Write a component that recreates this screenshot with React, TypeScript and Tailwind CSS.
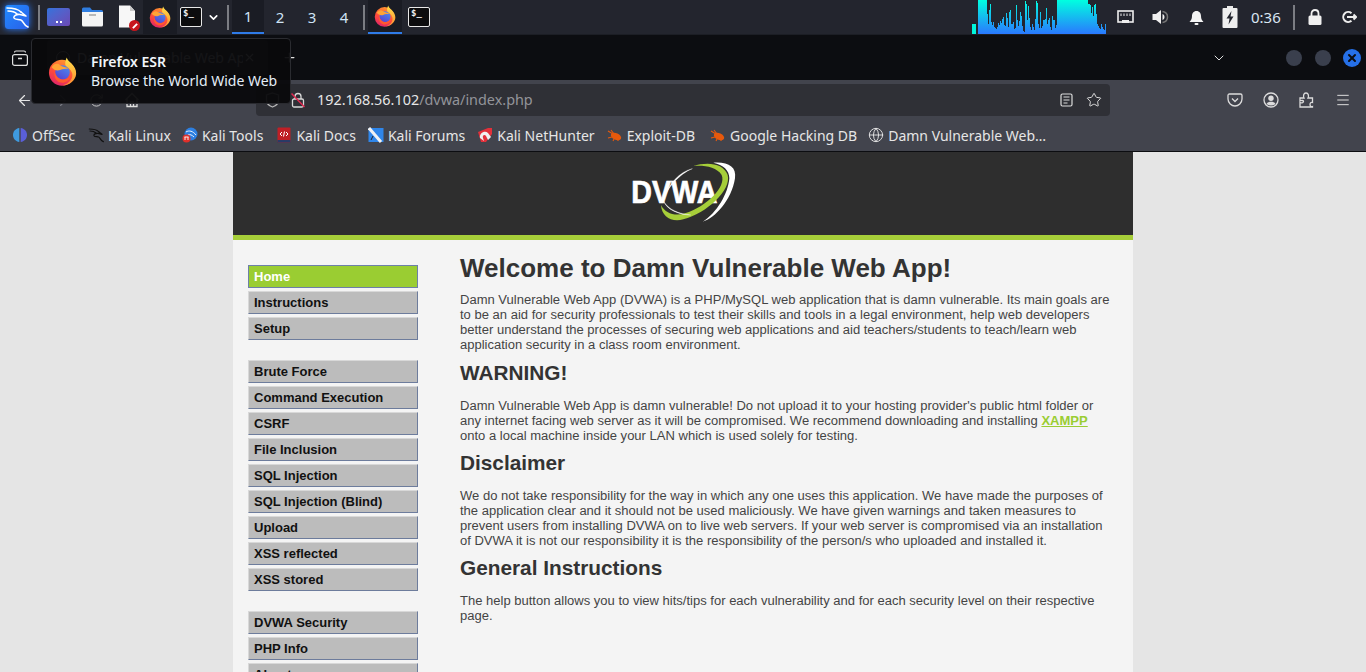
import React from "react";
import { ArrowLeft, ArrowRight, RotateCw, ChevronDown, Globe, Star, Menu, X, Plus } from "lucide-react";

const heights = [34,34,34,34,34,34,34,34,34,20,10,24,30,12,9,12,7,6,5,7,11,9,13,11,15,17,9,8,21,16,7,22,24,10,10,12,5,6,29,14,8,13,22,18,8,3,2,33,30,14,28,16,7,4,10,7,4,15,33,31,10,6,22,6,8,14,14,15,26,10,14,16,7,4,18,14,14,6,9,34,34,34,34,34,34,34,34,34,34,34,34,34,34,34,34,34,34,34,34,34,34,34,34,34,34,34,34,34,34,34,30,30,29,21,27,18,29,30,20,10,8,6,5,10,7,5,4,10];

function Firefox({ size = 24, id }: { size?: number; id: string }) {
  return (
    <svg width={size} height={size} viewBox="0 0 24 24">
      <defs>
        <linearGradient id={id} x1="0.7" y1="0" x2="0.3" y2="1">
          <stop offset="0" stopColor="#ff9a2e" />
          <stop offset="0.55" stopColor="#ff4a3a" />
          <stop offset="1" stopColor="#e0246a" />
        </linearGradient>
        <linearGradient id={`${id}y`} x1="0" y1="0" x2="0" y2="1">
          <stop offset="0" stopColor="#ffe14a" />
          <stop offset="1" stopColor="#ff8a30" />
        </linearGradient>
        <linearGradient id={`${id}b`} x1="0.8" y1="0" x2="0.2" y2="1">
          <stop offset="0" stopColor="#4a8cf0" />
          <stop offset="1" stopColor="#5a3fd0" />
        </linearGradient>
      </defs>
      <circle cx="11.6" cy="13" r="10.8" fill={`url(#${id})`} />
      <circle cx="12" cy="12.8" r="6" fill={`url(#${id}b)`} />
      <path d="M15.5 0.5C16 4 23.8 7 23.3 14C23 19 18 23.5 12 23.6C18 22 21 17.5 20 13.5C19 10 16 8.5 14.5 7C14 5 14.5 2.5 15.5 0.5Z" fill={`url(#${id}y)`} />
      <path d="M3 8.5C4.5 5.5 8 4.8 10 6.8C12 8.3 14.5 8.2 17 9.5C14 10 12.5 9.6 10 10.8C7.5 11.8 4.8 10.8 3 8.5Z" fill="#ffa436" />
      <path d="M5.5 12C6.5 16.5 10 19 13.5 18.6C16 18.3 18 16.5 19 15C18 19 14.5 21.5 11 21.2C7 20.8 4.5 16.5 5.5 12Z" fill="#ff5a2e" />
    </svg>
  );
}

function Terminal({ w = 23, h = 20 }: { w?: number; h?: number }) {
  return (
    <div style={{ width: w, height: h }} className="border border-[#e8e8e8] rounded-[2px] bg-[#0c0c0e] pl-[2px] text-[#eee] text-[9px] leading-[11px] font-['DejaVu_Sans_Mono',monospace] font-bold">
      $_
    </div>
  );
}

function Sep() {
  return <div className="w-[2px] h-[25px] bg-[#7b7d83] shrink-0" />;
}

function Dragon({ stroke = "#fff", width = 1.7 }: { stroke?: string; width?: number }) {
  return (
    <svg viewBox="0 0 24 24" className="w-full h-full" fill="none" stroke={stroke} strokeWidth={width} strokeLinecap="round" strokeLinejoin="round">
      <path d="M2 3C8 3 13 4 16 7" />
      <path d="M3 6C7 6 10 7 12 9" />
      <path d="M16 7L21 11L15 9.5C11 9 8.5 11 9 13C10 15 14 14 16 15C18.5 16 18 20 23 22" />
    </svg>
  );
}

function Workspace({ n, active }: { n: string; active?: boolean }) {
  return (
    <div className={`w-[32px] h-[34px] flex items-center justify-center text-[15px] text-[#cfe3f5] ${active ? "border-b-[2px] border-[#2f7be8] bg-[#1a1c24]" : ""}`}>
      {n}
    </div>
  );
}

function Graph() {
  return (
    <svg width="135" height="34" className="block">
      <defs>
        <linearGradient id="spec" gradientUnits="userSpaceOnUse" x1="0" y1="0" x2="0" y2="34">
          <stop offset="0" stopColor="#00ffe0" />
          <stop offset="1" stopColor="#2a78ff" />
        </linearGradient>
      </defs>
      <rect x="0" y="24" width="4" height="10" fill="#00f6dc" />
      {heights.map((h, i) => (
        <rect key={i} x={6 + i} y={34 - h} width="1" height={h} fill="url(#spec)" />
      ))}
    </svg>
  );
}

function TopPanel() {
  return (
    <div className="h-[35px] bg-[#23252e] flex items-center justify-between shrink-0 border-b border-[#1c1e25]">
      <div className="flex items-center h-full">
        <div className="w-[24px] h-[24px] ml-[5px] rounded-[3px] bg-gradient-to-br from-[#1f8bff] to-[#2a5fe8] shadow-[0_0_7px_#2a7bff]">
          <Dragon width={1.6} />
        </div>
        <div className="ml-[9px]"><Sep /></div>
        <div className="ml-[7px] w-[23px] h-[18px] rounded-[2px] bg-gradient-to-br from-[#2f73dc] to-[#6a48b4] flex items-end justify-center pb-[1px]">
          <span className="block w-[6px] h-[2px] mb-[2px] border-b-2 border-dotted border-white" />
        </div>
        <svg className="ml-[11px]" width="23" height="20" viewBox="0 0 23 20">
          <path d="M1 2Q1 0.5 2.5 0.5H9L11 3H20.5Q22 3 22 4.5V6H1Z" fill="#2f7de0" />
          <path d="M1 5H22V18Q22 19.5 20.5 19.5H2.5Q1 19.5 1 18Z" fill="#f3f3f3" />
          <rect x="8" y="7" width="7" height="2" fill="#b8b8b8" />
        </svg>
        <div className="relative ml-[14px] w-[21px] h-[24px]">
          <svg width="18" height="23" viewBox="0 0 18 23">
            <path d="M1 0.5H12L17 6V22.5H1Z" fill="#f7f7f7" />
            <path d="M12 0.5L17 6H12Z" fill="#c8c8c8" />
          </svg>
          <div className="absolute right-[-1px] bottom-[-2px] w-[11px] h-[11px] rounded-full bg-[#c8161d] flex items-center justify-center">
            <span className="block w-[6px] h-[2px] bg-white -rotate-45" />
          </div>
        </div>
        <div className="ml-[4px] w-[34px] h-full bg-[#1a1c24] flex items-center justify-center">
          <Firefox size={22} id="ff1" />
        </div>
        <div className="ml-[3px]"><Terminal w={22} h={20} /></div>
        <ChevronDown className="ml-[5px] text-white" size={13} strokeWidth={3} />
        <div className="ml-[7px]"><Sep /></div>
        <div className="ml-[3px] flex items-center">
          <Workspace n="1" active />
          <Workspace n="2" />
          <Workspace n="3" />
          <Workspace n="4" />
        </div>
        <div className="ml-[3px]"><Sep /></div>
        <div className="ml-[3px] w-[34px] h-[34px] border-b-[2px] border-[#2f7be8] bg-[#1a1c24] flex items-center justify-center">
          <Firefox size={22} id="ff2" />
        </div>
        <div className="ml-[6px]"><Terminal w={22} h={20} /></div>
      </div>
      <div className="flex items-center h-full">
        <div className="self-start"><Graph /></div>
        <svg className="ml-[10px]" width="17" height="14" viewBox="0 0 17 14">
          <rect x="1" y="1" width="15" height="11" fill="none" stroke="#eee" strokeWidth="1.6" />
          <path d="M4 3.5V6M7 3.5V6M10 3.5V6M13 3.5V6" stroke="#eee" strokeWidth="1" />
          <rect x="5" y="10" width="7" height="3" fill="#eee" />
        </svg>
        <svg className="ml-[18px]" width="18" height="16" viewBox="0 0 18 16">
          <path d="M0.5 5H4L9 1V15L4 11H0.5Z" fill="#f0f0f0" />
          <path d="M10.5 2.5C14 3 15.5 5.5 15.5 8C15.5 10.5 14 13 10.5 13.5" fill="none" stroke="#777" strokeWidth="1.5" />
          <path d="M10.5 5C12 5.5 12.5 6.8 12.5 8C12.5 9.2 12 10.5 10.5 11Z" fill="#f0f0f0" />
        </svg>
        <svg className="ml-[19px]" width="15" height="15" viewBox="0 0 15 15">
          <path d="M7.5 1C10.5 1 12 3.5 12 6C12 9 13 10.5 14.5 12H0.5C2 10.5 3 9 3 6C3 3.5 4.5 1 7.5 1Z" fill="#f4f4f4" />
          <rect x="5.5" y="13" width="4" height="2" rx="1" fill="#f4f4f4" />
        </svg>
        <svg className="ml-[18px]" width="16" height="22" viewBox="0 0 16 22">
          <rect x="5" y="0" width="6" height="2" fill="#e8e8e8" />
          <rect x="0.5" y="2" width="15" height="20" rx="1" fill="#eeeeee" />
          <path d="M9.5 5L4.5 12.5H7.5L6.5 18.5L11.5 10.5H8.5Z" fill="#23252e" />
        </svg>
        <span className="ml-[13px] w-[30px] text-[15px] text-[#d9e6f2]">0:36</span>
        <div className="ml-[12px]"><Sep /></div>
        <svg className="ml-[13px]" width="14" height="16" viewBox="0 0 14 16">
          <path d="M3.5 7V4.5C3.5 2.5 5 1 7 1S10.5 2.5 10.5 4.5V7" fill="none" stroke="#f0f0f0" strokeWidth="1.8" />
          <rect x="0.5" y="6.5" width="13" height="9.5" rx="1.5" fill="#f0f0f0" />
        </svg>
        <svg className="ml-[19px] mr-[9px]" width="16" height="14" viewBox="0 0 16 14">
          <path d="M10.5 3.2A5 5 0 1 0 10.5 10.8" fill="none" stroke="#eee" strokeWidth="2" />
          <path d="M6 7H15M12.5 4.5L15 7L12.5 9.5" fill="none" stroke="#eee" strokeWidth="2" />
        </svg>
      </div>
    </div>
  );
}

function TabBar() {
  return (
    <div className="h-[45px] bg-[#0c0d11] flex items-center shrink-0 relative">
      <svg className="ml-[12px]" width="16" height="16" viewBox="0 0 16 16" fill="none" stroke="#e0e0e0" strokeWidth="1.2">
        <rect x="0.6" y="4.6" width="14.8" height="10.8" rx="2" />
        <path d="M2.5 2.5Q2.5 1 4 1H12Q13.5 1 13.5 2.5" />
        <path d="M6 8.5H10" strokeWidth="1.5" />
      </svg>
      <div className="ml-[19px] w-[221px] h-[35px] rounded-[4px] bg-[#2b2c32] flex items-center pl-[9px] pr-[12px] text-[14px] text-[#e0e0e0]">
        <span className="block w-[14px] h-[14px] rounded-full border border-[#d0d0d0] shrink-0 mr-[7px]" />
        <span className="whitespace-nowrap overflow-hidden flex-1">Damn Vulnerable Web Ap</span>
        <X size={13} className="shrink-0" />
      </div>
      <Plus size={15} className="ml-[14px] text-[#e0e0e0]" />
      <div className="ml-auto flex items-center mr-[5px]">
        <ChevronDown size={16} className="text-[#e0e0e0] mr-[59px]" strokeWidth={1.5} />
        <span className="block w-[16px] h-[16px] rounded-full bg-[#3a3f4d] mr-[13px]" />
        <span className="block w-[16px] h-[16px] rounded-full bg-[#3a3f4d] mr-[12px]" />
        <span className="flex w-[18px] h-[18px] rounded-full bg-[#2670e8] items-center justify-center">
          <X size={12} strokeWidth={4} className="text-[#0c0d11]" />
        </span>
      </div>
    </div>
  );
}

function Tooltip() {
  return (
    <div className="absolute left-[31px] top-[38px] w-[260px] h-[66px] rounded-[4px] border border-[#2a2b30] bg-[#0a0a0c]/95 flex items-center z-10">
      <div className="ml-[15px] w-[30px] flex justify-center">
        <Firefox size={29} id="ff3" />
      </div>
      <div className="ml-[14px] text-[14px] leading-[19px] text-[#e4eef8] whitespace-nowrap">
        <div className="font-semibold text-[#f2f6fa]">Firefox ESR</div>
        <div>Browse the World Wide Web</div>
      </div>
    </div>
  );
}

function NavBar() {
  return (
    <div className="h-[42px] bg-[#42444d] flex items-center shrink-0 text-[#e6e6e6] pb-[2px]">
      <ArrowLeft size={17} className="ml-[16px]" strokeWidth={1.7} />
      <ArrowRight size={17} className="ml-[19px] text-[#777982]" strokeWidth={1.7} />
      <RotateCw size={15} className="ml-[20px] text-[#c8c8c8]" strokeWidth={1.6} />
      <svg className="ml-[20px]" width="16" height="16" viewBox="0 0 16 16" fill="none" stroke="#dcdcdc" strokeWidth="1.3">
        <path d="M1.5 8L8 1.5L14.5 8" />
        <path d="M3 7V14.5H13V7M6.5 14.5V10H9.5V14.5" />
      </svg>
      <div className="ml-[116px] w-[854px] h-[32px] rounded-[4px] bg-[#2f3036] flex items-center">
        <svg className="ml-[9px]" width="15" height="16" viewBox="0 0 15 16" fill="none" stroke="#b8b8b8" strokeWidth="1.3">
          <path d="M7.5 1L13.5 3V8C13.5 11.5 10.5 14 7.5 15C4.5 14 1.5 11.5 1.5 8V3Z" />
        </svg>
        <svg className="ml-[11px]" width="14" height="16" viewBox="0 0 14 16" fill="none">
          <path d="M4 7V4.5C4 2.8 5.3 1.5 7 1.5S10 2.8 10 4.5V7" stroke="#d8d8d8" strokeWidth="1.3" />
          <rect x="1.5" y="7" width="11" height="8" rx="1.5" stroke="#d8d8d8" strokeWidth="1.3" />
          <path d="M0.5 1.5L13.5 15" stroke="#e22850" strokeWidth="1.5" />
        </svg>
        <div className="ml-[12px] text-[14.4px] whitespace-nowrap">
          <span className="text-[#e6e6e6]">192.168.56.102</span>
          <span className="text-[#93949a]">/dvwa/index.php</span>
        </div>
        <svg className="ml-auto" width="13" height="14" viewBox="0 0 13 14" fill="none" stroke="#dcdcdc" strokeWidth="1.2">
          <rect x="1" y="1" width="11" height="12" rx="1.5" />
          <path d="M3.5 4H9.5M3.5 7H9.5M3.5 10H7.5" />
        </svg>
        <Star size={16} className="ml-[13px] mr-[8px] text-[#dcdcdc]" strokeWidth={1.5} />
      </div>
      <svg className="ml-[117px]" width="16" height="14" viewBox="0 0 16 14" fill="none" stroke="#dcdcdc" strokeWidth="1.3">
        <path d="M1 2.5Q1 1 2.5 1H13.5Q15 1 15 2.5V6C15 10 11.5 13 8 13S1 10 1 6Z" />
        <path d="M5 5.5L8 8.5L11 5.5" />
      </svg>
      <svg className="ml-[20px]" width="16" height="16" viewBox="0 0 16 16">
        <circle cx="8" cy="8" r="7" fill="none" stroke="#dcdcdc" strokeWidth="1.3" />
        <circle cx="8" cy="6.3" r="2.7" fill="#dcdcdc" />
        <path d="M3.5 12C4.5 10 6 9.7 8 9.7S11.5 10 12.5 12Q8 15 3.5 12Z" fill="#dcdcdc" />
      </svg>
      <svg className="ml-[20px]" width="15" height="16" viewBox="0 0 15 16" fill="none" stroke="#dcdcdc" strokeWidth="1.3">
        <path d="M1 6H5C4 4 4.5 1 7 1S10 4 9 6H13.5V10.5C12 10 11 11 11 12.5S12 15 13.5 14.5V15H1V10.5C3 11.5 4.5 10.5 4.5 9.5S3 8 1 9Z" />
      </svg>
      <Menu size={16} className="ml-[21px] text-[#dcdcdc]" strokeWidth={1.5} />
    </div>
  );
}

function Bug() {
  return (
    <svg width="16" height="16" viewBox="0 0 16 16">
      <ellipse cx="9" cy="9.5" rx="5.5" ry="3.4" fill="#e8590c" transform="rotate(25 9 9.5)" />
      <path d="M1 4L6 7M4 3L7 7M1 11L5 10M6 14L7 12M11 14L11 12" stroke="#e8590c" strokeWidth="1.1" />
    </svg>
  );
}

function BM({ icon, label, ml }: { icon: React.ReactNode; label: string; ml: string }) {
  return (
    <div className={`flex items-center shrink-0 ${ml}`}>
      <span className="w-[16px] h-[16px] flex items-center justify-center shrink-0">{icon}</span>
      <span className="ml-[4px] whitespace-nowrap">{label}</span>
    </div>
  );
}

function Bookmarks() {
  return (
    <div className="h-[30px] bg-[#42444d] flex items-center shrink-0 text-[14px] text-[#e6e6e6] border-b border-[#0c0d11] pb-[3px]">
      <BM
        ml="ml-[12px]"
        label="OffSec"
        icon={
          <svg width="16" height="16" viewBox="0 0 16 16">
            <path d="M7.3 1C3 1.5 1 5 1 8S3 14.5 7.3 15Z" fill="#3f9be0" />
            <path d="M8.7 1C13 1.5 15 5 15 8S13 14.5 8.7 15Z" fill="#5a5fd8" />
          </svg>
        }
      />
      <BM ml="ml-[13px]" label="Kali Linux" icon={<Dragon stroke="#111" width={1.8} />} />
      <BM
        ml="ml-[11px]"
        label="Kali Tools"
        icon={
          <svg width="16" height="16" viewBox="0 0 16 16">
            <circle cx="9" cy="7" r="6.5" fill="#2d7fe0" />
            <path d="M4 5C7 3 11 4 14 8M6 8C8 7 10 8 12 10" stroke="#e8f2fc" strokeWidth="1" fill="none" />
            <circle cx="4.5" cy="11.5" r="4" fill="#e0302a" />
            <path d="M3 10V13M6 10V13M2.5 10H6.5" stroke="#fff" strokeWidth="0.9" />
          </svg>
        }
      />
      <BM
        ml="ml-[13px]"
        label="Kali Docs"
        icon={
          <svg width="14" height="16" viewBox="0 0 14 16">
            <rect x="0.5" y="0.5" width="13" height="15" rx="1" fill="#c01f26" />
            <rect x="0.5" y="13" width="13" height="2.5" fill="#2a3a66" />
            <path d="M5 5L3 7L5 9M9 5L11 7L9 9M7.5 4.5L6.5 9.5" stroke="#fff" strokeWidth="1" fill="none" />
          </svg>
        }
      />
      <BM
        ml="ml-[12px]"
        label="Kali Forums"
        icon={
          <svg width="16" height="16" viewBox="0 0 16 16">
            <rect x="0.5" y="1" width="15" height="14" fill="#2f86ea" />
            <path d="M1 1L13 15" stroke="#f2f2f2" strokeWidth="3" />
            <path d="M5 9L3 13" stroke="#222" strokeWidth="1" />
          </svg>
        }
      />
      <BM
        ml="ml-[12px]"
        label="Kali NetHunter"
        icon={
          <svg width="16" height="16" viewBox="0 0 16 16">
            <path d="M1 5L11 1H15V7L9 15H4Z" fill="#e2303a" />
            <path d="M3 11C2 6 8 3 11 6L14 10L11 13L9 9C8 7 5 8 6 11L7 14Z" fill="#f0f0f0" />
          </svg>
        }
      />
      <BM ml="ml-[12px]" label="Exploit-DB" icon={<Bug />} />
      <BM ml="ml-[15px]" label="Google Hacking DB" icon={<Bug />} />
      <BM ml="ml-[11px]" label="Damn Vulnerable Web…" icon={<Globe size={16} strokeWidth={1.4} />} />
    </div>
  );
}

function Logo() {
  return (
    <svg width="160" height="83" viewBox="0 6 480 249" className="mr-[6px]">
      <text x="94" y="159" fontFamily="Liberation Sans, Arial, sans-serif" fontWeight="700" fontSize="96" fill="#fff" stroke="#fff" strokeWidth="2" textLength="258" lengthAdjust="spacingAndGlyphs">DVWA</text>
      <path d="M280 48C320 35 370 38 383 75C395 120 320 190 250 208C215 218 185 200 183 165C195 190 225 200 255 190C320 170 380 110 365 75C350 50 310 45 280 48Z" fill="#a6ce39" />
      <path d="M340 38C385 35 410 50 405 85C395 150 345 205 308 215C350 190 385 130 388 85C388 60 370 45 340 38Z" fill="#fff" />
      <path d="M277 56C240 65 205 100 190 150C200 115 240 70 277 56Z" fill="#fff" stroke="#fff" strokeWidth="1" />
      <path d="M190 152C200 180 240 195 272 195C240 192 205 180 190 152Z" fill="#fff" stroke="#fff" strokeWidth="1" />
    </svg>
  );
}

const groups = [
  ["Home", "Instructions", "Setup"],
  ["Brute Force", "Command Execution", "CSRF", "File Inclusion", "SQL Injection", "SQL Injection (Blind)", "Upload", "XSS reflected", "XSS stored"],
  ["DVWA Security", "PHP Info", "About"],
];

function Sidebar() {
  return (
    <div className="w-[170px] shrink-0 flex flex-col gap-[20px] ml-[15px] mt-[25px]">
      {groups.map((g, i) => (
        <div key={i} className="flex flex-col gap-[3px]">
          {g.map((item) =>
            item === "Home" ? (
              <div key={item} className="h-[23px] border border-[#6d80a8] bg-[#9acd32] text-white text-[13px] font-bold leading-[21px] pl-[5px]">
                {item}
              </div>
            ) : (
              <div key={item} className="h-[23px] border border-[#d8d8d8] border-r-[#6d7c9c] border-b-[#6d7c9c] bg-[#bcbcbc] text-[#111] text-[13px] font-bold leading-[21px] pl-[5px]">
                {item}
              </div>
            )
          )}
        </div>
      ))}
    </div>
  );
}

function Main() {
  return (
    <div className="ml-[42px] w-[652px] text-[13.02px] leading-[15px] text-[#444]">
      <h1 className="text-[26px] leading-[30px] font-bold text-[#333] mt-[13px]">Welcome to Damn Vulnerable Web App!</h1>
      <p className="mt-[9px]">
        Damn Vulnerable Web App (DVWA) is a PHP/MySQL web application that is damn vulnerable. Its main goals are to be an aid for security professionals to test their skills and tools in a legal environment, help web developers better understand the processes of securing web applications and aid teachers/students to teach/learn web application security in a class room environment.
      </p>
      <h2 className="text-[20.8px] leading-[24px] font-bold text-[#333] mt-[9px]">WARNING!</h2>
      <p className="mt-[13px]">
        Damn Vulnerable Web App is damn vulnerable! Do not upload it to your hosting provider's public html folder or any internet facing web server as it will be compromised. We recommend downloading and installing <a className="font-bold text-[#9acd32] underline">XAMPP</a> onto a local machine inside your LAN which is used solely for testing.
      </p>
      <h2 className="text-[20.8px] leading-[24px] font-bold text-[#333] mt-[8px]">Disclaimer</h2>
      <p className="mt-[13px]">
        We do not take responsibility for the way in which any one uses this application. We have made the purposes of the application clear and it should not be used maliciously. We have given warnings and taken measures to prevent users from installing DVWA on to live web servers. If your web server is compromised via an installation of DVWA it is not our responsibility it is the responsibility of the person/s who uploaded and installed it.
      </p>
      <h2 className="text-[20.8px] leading-[24px] font-bold text-[#333] mt-[8px]">General Instructions</h2>
      <p className="mt-[13px]">
        The help button allows you to view hits/tips for each vulnerability and for each security level on their respective page.
      </p>
    </div>
  );
}

export default function App() {
  return (
    <div className="relative w-[1366px] h-[672px] overflow-hidden flex flex-col font-['Noto_Sans',sans-serif] bg-[#e5e5e5]">
      <TopPanel />
      <TabBar />
      <NavBar />
      <Bookmarks />
      <Tooltip />
      <div className="flex-1 flex justify-center overflow-hidden font-['Liberation_Sans',Arial,sans-serif]">
        <div className="w-[900px] bg-[#f4f4f4] h-max min-h-full">
          <div className="h-[83px] bg-[#2e2e2e] flex items-center justify-center">
            <Logo />
          </div>
          <div className="h-[5px] bg-[#a6ce39]" />
          <div className="flex items-start">
            <Sidebar />
            <Main />
          </div>
        </div>
      </div>
    </div>
  );
}
